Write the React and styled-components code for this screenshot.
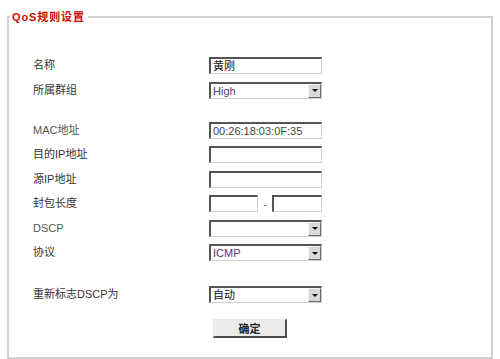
import React from "react";
import styled, { createGlobalStyle } from "styled-components";

const Global = createGlobalStyle`
  html, body { margin: 0; padding: 0; background: #fff; }
  body {
    font-family: "Liberation Sans", Arial, "Noto Sans CJK SC", sans-serif;
    font-size: 11px;
    color: #333;
  }
`;

const Panel = styled.fieldset`
  margin: 9px 7px 0;
  padding: 0 0 19px;
  border: 2px solid #d0d0d0;
  min-width: 0;
`;

const Legend = styled.legend`
  margin-left: 1px;
  padding: 0 3px 0 2px;
  font-size: 11px;
  line-height: 16px;
  font-weight: bold;
  color: #cc0a0a;
  letter-spacing: 0.9px;
`;

const Section = styled.div`
  display: flex;
  flex-direction: column;
  gap: 7.5px;
  padding-left: 24px;
  margin-top: ${(p) => p.$top}px;
`;

const Row = styled.div`
  display: grid;
  grid-template-columns: 176px 113px;
  align-items: center;
  height: 17px;
`;

const Label = styled.span`
  font-size: 11px;
  line-height: 17px;
  color: ${(p) => (p.$muted ? "#555" : "#333")};
  white-space: nowrap;
`;

const TextBox = styled.div`
  box-sizing: border-box;
  width: ${(p) => p.$w || 113}px;
  height: 17px;
  border-style: solid;
  border-width: 2px 1px 1px 2px;
  border-color: #555 #d0d0d0 #d0d0d0 #555;
  background: #fff;
  padding: 0 2px;
  font-size: 11px;
  line-height: 14px;
  color: ${(p) => p.$color || "#222"};
  white-space: nowrap;
  overflow: hidden;
`;

const SelectBox = styled.div`
  box-sizing: border-box;
  width: 113px;
  height: 17px;
  display: flex;
  align-items: stretch;
  border-style: solid;
  border-width: 2px 1px 1px 2px;
  border-color: #555 #d0d0d0 #d0d0d0 #555;
  background: #fff;
`;

const SelectValue = styled.span`
  flex: 1;
  padding: 0 2px;
  font-size: 11px;
  line-height: 14px;
  color: ${(p) => p.$color || "#222"};
  white-space: nowrap;
`;

const ArrowBtn = styled.span`
  box-sizing: border-box;
  width: 13px;
  display: flex;
  align-items: center;
  justify-content: center;
  background: #d8d8d8;
  border-style: solid;
  border-width: 1px;
  border-color: #f4f4f4 #6a6a6a #6a6a6a #f4f4f4;
  &::after {
    content: "";
    width: 0;
    height: 0;
    border-left: 3px solid transparent;
    border-right: 3px solid transparent;
    border-top: 3px solid #111;
  }
`;

const RangeWrap = styled.div`
  display: flex;
  align-items: center;
`;

const Dash = styled.span`
  width: 14px;
  text-align: center;
  color: #666;
  font-size: 11px;
`;

const ButtonRow = styled.div`
  display: flex;
  justify-content: center;
  margin-top: 16px;
`;

const Button = styled.button`
  box-sizing: border-box;
  width: 74px;
  height: 19px;
  padding: 0;
  background: #ececec;
  border-style: solid;
  border-width: 1px 2px 2px 1px;
  border-color: #e8e8e8 #4a4a4a #4a4a4a #e8e8e8;
  font-family: "Liberation Sans", "Noto Sans CJK SC", sans-serif;
  font-size: 11px;
  font-weight: bold;
  color: #222;
`;

const Select = ({ value, color }) => (
  <SelectBox>
    <SelectValue $color={color}>{value}</SelectValue>
    <ArrowBtn />
  </SelectBox>
);

export default function App() {
  return (
    <>
      <Global />
      <Panel>
        <Legend>QoS规则设置</Legend>
        <Section $top={32}>
          <Row>
            <Label>名称</Label>
            <TextBox $color="#111">黄刚</TextBox>
          </Row>
          <Row>
            <Label>所属群组</Label>
            <Select value="High" color="#5c2f7f" />
          </Row>
        </Section>
        <Section $top={23}>
          <Row>
            <Label $muted>MAC地址</Label>
            <TextBox $color="#444">00:26:18:03:0F:35</TextBox>
          </Row>
          <Row>
            <Label>目的IP地址</Label>
            <TextBox />
          </Row>
          <Row>
            <Label>源IP地址</Label>
            <TextBox />
          </Row>
          <Row>
            <Label>封包长度</Label>
            <RangeWrap>
              <TextBox $w={49} />
              <Dash>-</Dash>
              <TextBox $w={50} />
            </RangeWrap>
          </Row>
          <Row>
            <Label $muted>DSCP</Label>
            <Select value="" />
          </Row>
          <Row>
            <Label>协议</Label>
            <Select value="ICMP" color="#5c2f7f" />
          </Row>
        </Section>
        <Section $top={25}>
          <Row>
            <Label>重新标志DSCP为</Label>
            <Select value="自动" color="#111" />
          </Row>
        </Section>
        <ButtonRow>
          <Button>确定</Button>
        </ButtonRow>
      </Panel>
    </>
  );
}
